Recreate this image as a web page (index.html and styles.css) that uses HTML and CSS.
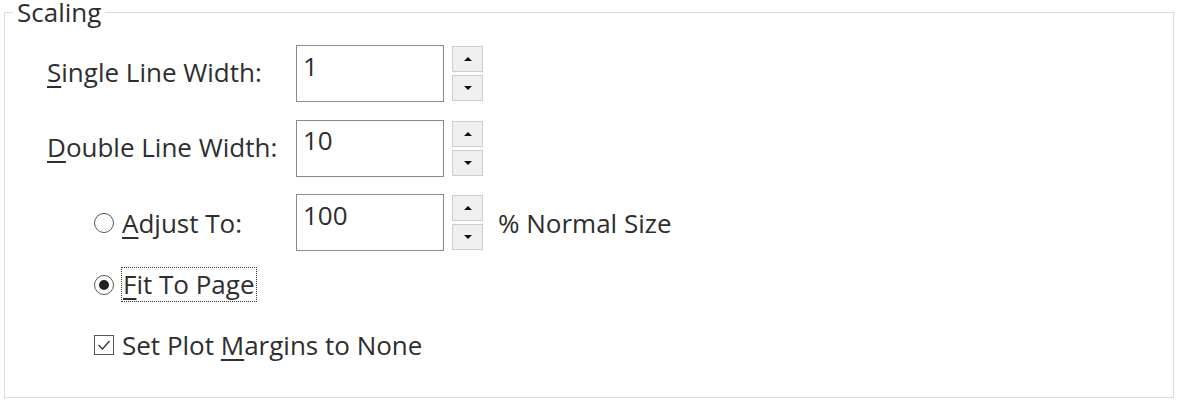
FILE: index.html
```html
<!DOCTYPE html>
<html lang="en">
<head>
  <meta charset="UTF-8">
  <title>Scaling</title>
  <link rel="stylesheet" href="styles.css">
</head>
<body>
  <fieldset class="group">
    <legend>Scaling</legend>

    <!-- line widths -->
    <div class="field-row">
      <label class="field-label" for="singleWidth"><u>S</u>ingle Line Width:</label>
      <input class="spin-input" id="singleWidth" type="text" value="1">
      <div class="spin-buttons">
        <span class="spin-btn up"></span>
        <span class="spin-btn down"></span>
      </div>
    </div>

    <div class="field-row">
      <label class="field-label" for="doubleWidth"><u>D</u>ouble Line Width:</label>
      <input class="spin-input" id="doubleWidth" type="text" value="10">
      <div class="spin-buttons">
        <span class="spin-btn up"></span>
        <span class="spin-btn down"></span>
      </div>
    </div>

    <!-- scale options -->
    <div class="field-row indent">
      <label class="option option-label">
        <span class="radio"></span>
        <span><u>A</u>djust To:</span>
      </label>
      <input class="spin-input" type="text" value="100">
      <div class="spin-buttons">
        <span class="spin-btn up"></span>
        <span class="spin-btn down"></span>
      </div>
      <span class="suffix">% Normal Size</span>
    </div>

    <div class="option-row fit">
      <label class="option">
        <span class="radio checked"></span>
        <span class="focus"><u>F</u>it To Page</span>
      </label>
    </div>

    <div class="option-row margins">
      <label class="option">
        <span class="checkbox">
          <svg width="20" height="20" viewBox="0 0 20 20"><path d="M4.5 10 L8.5 14 L15.5 6" fill="none" stroke="#333" stroke-width="1.3"/></svg>
        </span>
        <span>Set Plot <u>M</u>argins to None</span>
      </label>
    </div>
  </fieldset>
</body>
</html>
```

FILE: styles.css
```css
body, html {
  margin: 0;
  padding: 0;
  background: #fff;
  font-family: 'Open Sans', 'Noto Sans', sans-serif;
  font-size: 26px;
  color: #2e2e2e;
}
.group {
  margin: 0 3px 0 4px;
  padding: 21px 0 0 0;
  height: 375px;
  border: 1px solid #dcdcdc;
  min-width: 0;
}
.group legend {
  margin-left: 8px;
  padding: 0 4px 0 4px;
  font-size: 26px;
  line-height: 24px;
}
u {
  text-decoration-thickness: 1.5px;
  text-underline-offset: 4px;
}
.field-row {
  display: flex;
  align-items: center;
  height: 57px;
  padding-left: 42px;
  margin-bottom: 17.5px;
}
.field-row.indent {
  padding-left: 89px;
  margin-bottom: 16px;
}
.field-label {
  width: 249px;
  padding-bottom: 3px;
}
.option-label {
  width: 202px;
}
.spin-input {
  box-sizing: border-box;
  width: 148px;
  height: 57px;
  margin: 0;
  padding: 2px 6px 18px;
  border: 1px solid #8a8a8a;
  font-family: inherit;
  font-size: 26px;
  color: #2e2e2e;
  outline: none;
}
.spin-buttons {
  display: flex;
  flex-direction: column;
  gap: 3px;
  margin-left: 8px;
}
.spin-btn {
  box-sizing: border-box;
  width: 31px;
  height: 26px;
  border: 1px solid #cdcdcd;
  background: #efefef;
  display: flex;
  align-items: center;
  justify-content: center;
}
.spin-btn::after {
  content: "";
  border-left: 4px solid transparent;
  border-right: 4px solid transparent;
}
.spin-btn.up::after {
  border-bottom: 4px solid #111;
}
.spin-btn.down::after {
  border-top: 4px solid #111;
}
.suffix {
  margin-left: 15px;
}
.option {
  display: flex;
  align-items: center;
  gap: 8px;
}
.option-row {
  padding-left: 89px;
}
.option-row.margins {
  margin-top: 25px;
}
.radio {
  box-sizing: border-box;
  width: 20px;
  height: 20px;
  border: 1.5px solid #555;
  border-radius: 50%;
  display: flex;
  align-items: center;
  justify-content: center;
}
.radio.checked::after {
  content: "";
  width: 10px;
  height: 10px;
  border-radius: 50%;
  background: #222;
}
.checkbox {
  box-sizing: border-box;
  width: 20px;
  height: 20px;
  border: 1.5px solid #555;
  display: flex;
}
.checkbox svg {
  margin: -1.5px;
}
.focus {
  border: 1px dotted #333;
  line-height: 33px;
  padding: 0 1px;
  margin-left: -1px;
}
```
